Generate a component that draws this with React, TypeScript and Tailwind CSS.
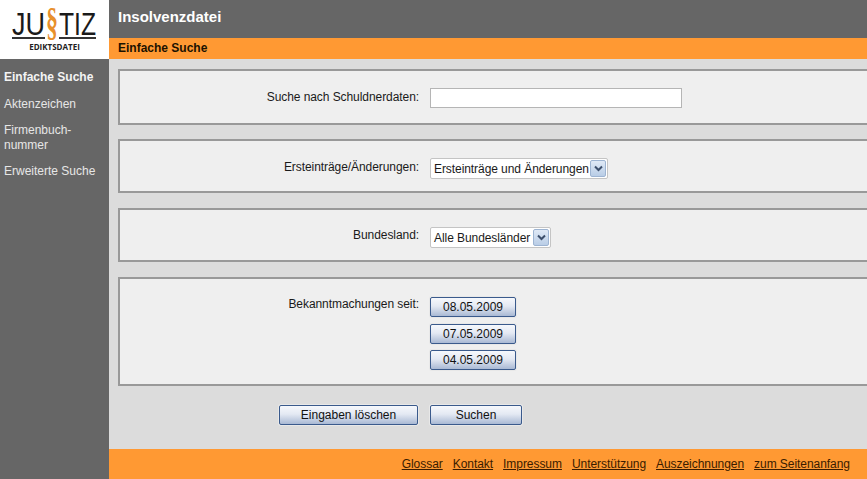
const font = "font-['Liberation_Sans',Arial,sans-serif]";
const btn =
  "h-[20px] rounded-[2px] border border-[#3a5a8c] bg-[linear-gradient(#f6f8fc,#e4e9f3_45%,#a9b9d4)] text-[12px] text-[#111] shadow-[0_0_0_1px_#e8e8e8]";

function Select({ label, width }: { label: string; width: string }) {
  return (
    <div className={`flex h-[21px] items-center justify-between rounded-[2px] border border-[#c4c4c4] bg-white pl-[3px] pr-[1px] whitespace-nowrap ${width}`}>
      <span className="text-[12px] tracking-[-0.07px] text-[#1a1a1a]">{label}</span>
      <span className="flex h-[17px] w-[16px] items-center justify-center rounded-[2px] border border-[#9db4d2] bg-[linear-gradient(#dfe9f6,#b9cde6)]">
        <svg width="9" height="7" viewBox="0 0 9 7" fill="none">
          <path d="M1 1.5 4.5 5 8 1.5" stroke="#3c4f6c" strokeWidth="2" />
        </svg>
      </span>
    </div>
  );
}

function Panel({ label, height, labelTop, children }: { label: string; height: string; labelTop: string; children: React.ReactNode }) {
  return (
    <div className={`flex border-y-2 border-l-2 border-[#999999] bg-[#efefef] ${height}`}>
      <div className={`w-[310px] pr-[11px] text-right text-[12px] leading-[20px] tracking-[-0.07px] text-[#1a1a1a] ${labelTop}`}>
        {label}
      </div>
      <div className="pt-[17px]">{children}</div>
    </div>
  );
}

function Logo() {
  return (
    <div className="h-[59px] bg-white">
      <svg width="109" height="59" viewBox="0 0 109 59">
        <text x="12" y="35" fontFamily="Liberation Sans" fontSize="31" fill="#1a1a1a" textLength="33" lengthAdjust="spacingAndGlyphs">JU</text>
        <text x="59" y="35" fontFamily="Liberation Sans" fontSize="31" fill="#1a1a1a" textLength="37" lengthAdjust="spacingAndGlyphs">TIZ</text>
        <text x="52" y="35" textAnchor="middle" fontFamily="Liberation Serif" fontWeight="700" fontSize="40" fill="#e8902c" textLength="12" lengthAdjust="spacingAndGlyphs">§</text>
        <rect x="12" y="37" width="33" height="2" fill="#333" />
        <rect x="59" y="37" width="37" height="2" fill="#333" />
        <text x="54.5" y="50" textAnchor="middle" fontFamily="Open Sans" fontWeight="700" fontSize="8" fill="#222">EDIKTSDATEI</text>
      </svg>
    </div>
  );
}

export default function App() {
  const links = ["Glossar", "Kontakt", "Impressum", "Unterstützung", "Auszeichnungen", "zum Seitenanfang"];
  return (
    <div className={`${font} flex h-[479px] w-[867px] overflow-hidden bg-[#dcdcdc]`}>
      <div className="w-[109px] shrink-0 bg-[#666666]">
        <Logo />
        <div className="pt-[10px] pl-[4px] text-[12px] text-[#e6e6e6]">
          <div className="leading-[16px] font-bold text-[#f4f4f4]">Einfache Suche</div>
          <div className="mt-[11px] leading-[16px]">Aktenzeichen</div>
          <div className="mt-[11px] leading-[15px]">Firmenbuch-<br />nummer</div>
          <div className="mt-[10px] leading-[16px]">Erweiterte Suche</div>
        </div>
      </div>
      <div className="flex min-w-0 flex-1 flex-col">
        <div className="h-[38px] bg-[#666666] pt-[7px] pl-[9px] text-[15px] leading-[20px] font-bold text-white">
          Insolvenzdatei
        </div>
        <div className="h-[21px] bg-[#ff9933] pl-[9px] text-[12px] leading-[21px] font-bold text-[#1c1200]">
          Einfache Suche
        </div>
        <div className="flex flex-1 flex-col pt-[10px] pl-[9px]">
          <Panel label="Suche nach Schuldnerdaten:" height="h-[56px]" labelTop="pt-[16px]">
            <div className="h-[20px] w-[252px] border border-[#b5b5b5] bg-white" />
          </Panel>
          <div className="mt-[14px]">
            <Panel label="Ersteinträge/Änderungen:" height="h-[54px]" labelTop="pt-[16px]">
              <Select label="Ersteinträge und Änderungen" width="w-[178px]" />
            </Panel>
          </div>
          <div className="mt-[15px]">
            <Panel label="Bundesland:" height="h-[54px]" labelTop="pt-[15px]">
              <Select label="Alle Bundesländer" width="w-[121px]" />
            </Panel>
          </div>
          <div className="mt-[15px]">
            <Panel label="Bekanntmachungen seit:" height="h-[109px]" labelTop="pt-[15px]">
              <div className="flex flex-col gap-[6.5px] pt-[1px]">
                <button className={`${btn} w-[86px]`}>08.05.2009</button>
                <button className={`${btn} w-[86px]`}>07.05.2009</button>
                <button className={`${btn} w-[86px]`}>04.05.2009</button>
              </div>
            </Panel>
          </div>
          <div className="mt-[19px] flex gap-[12px] pl-[161px]">
            <button className={`${btn} w-[139px]`}>Eingaben löschen</button>
            <button className={`${btn} w-[92px]`}>Suchen</button>
          </div>
        </div>
        <div className="flex h-[30px] items-center justify-end gap-[10px] bg-[#ff9933] pr-[17px] text-[12px] tracking-[-0.05px] text-[#3a1c00]">
          {links.map((l) => (
            <a key={l} className="underline">{l}</a>
          ))}
        </div>
      </div>
    </div>
  );
}
